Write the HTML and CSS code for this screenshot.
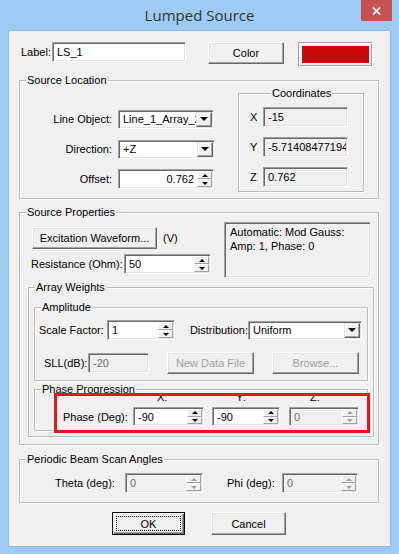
FILE: index.html
```html
<html>
<head>
    <meta charset='UTF-8'>
    <title>Lumped Source</title>
    <link rel="stylesheet" href="styles.css">
</head>
<body>
<div class='window'>
    <div class='titlebar'>
        <div></div>
        <div class='title'>Lumped Source</div>
        <div class='close'>
            <svg width='9' height='8' viewBox='0 0 9 8'><path d='M1 0.5 L8 7.5 M8 0.5 L1 7.5' stroke='#fff' stroke-width='1.7'/></svg>
        </div>
    </div>

    <div class='client'>
        <div class='top-row'>
            <span class='lab-label'>Label:</span>
            <div class='field f-label'><span class='val'>LS_1</span></div>
            <div class='btn b-color'>Color</div>
            <div class='swatch'><div class='swatch-fill'></div></div>
        </div>

        <div class='group g-loc'>
            <span class='group-title'>Source Location</span>
            <div class='loc-fields'>
                <div class='frow'>
                    <span class='flab'>Line Object:</span>
                    <div class='field combo c-line'><span class='val'>Line_1_Array_2</span><span class='drop'></span></div>
                </div>
                <div class='frow'>
                    <span class='flab'>Direction:</span>
                    <div class='field combo c-dir'><span class='val'>+Z</span><span class='drop'></span></div>
                </div>
                <div class='frow'>
                    <span class='flab'>Offset:</span>
                    <div class='field f-off'><span class='val right'>0.762</span><span class='spin'><span class='sb up'></span><span class='sb down'></span></span></div>
                </div>
            </div>
            <div class='group g-coords'>
                <span class='group-title t-coords'>Coordinates</span>
                <div class='crow'><span class='clab'>X</span><div class='field ro cfield'><span class='val'>-15</span></div></div>
                <div class='crow'><span class='clab'>Y</span><div class='field ro cfield'><span class='val'>-5.71408477194</span></div></div>
                <div class='crow'><span class='clab'>Z</span><div class='field ro cfield'><span class='val'>0.762</span></div></div>
            </div>
        </div>

        <div class='group g-props'>
            <span class='group-title'>Source Properties</span>
            <div class='props-top'>
                <div class='props-left'>
                    <div class='wave-row'>
                        <div class='btn b-wave'>Excitation Waveform...</div>
                        <span class='units'>(V)</span>
                    </div>
                    <div class='res-row'>
                        <span class='res-lab'>Resistance (Ohm):</span>
                        <div class='field f-res'><span class='val'>50</span><span class='spin'><span class='sb up'></span><span class='sb down'></span></span></div>
                    </div>
                </div>
                <div class='info'>Automatic: Mod Gauss:<br>Amp: 1, Phase: 0</div>
            </div>

            <div class='group g-array'>
                <span class='group-title'>Array Weights</span>

                <div class='group g-amp'>
                    <span class='group-title'>Amplitude</span>
                    <div class='amp-row1'>
                        <span class='sf-lab'>Scale Factor:</span>
                        <div class='field f-sf'><span class='val'>1</span><span class='spin'><span class='sb up'></span><span class='sb down'></span></span></div>
                        <span class='dist-lab'>Distribution:</span>
                        <div class='field combo c-dist'><span class='val'>Uniform</span><span class='drop'></span></div>
                    </div>
                    <div class='amp-row2'>
                        <span class='sll-lab'>SLL(dB):</span>
                        <div class='field off f-sll'><span class='val'>-20</span></div>
                        <div class='btn off b-ndf'>New Data File</div>
                        <div class='btn off b-browse'>Browse...</div>
                    </div>
                </div>

                <div class='group g-phase'>
                    <span class='group-title'>Phase Progression</span>
                    <div class='axis-row'>
                        <span class='ax ax-x'>X:</span>
                        <span class='ax ax-y'>Y:</span>
                        <span class='ax ax-z'>Z:</span>
                    </div>
                    <div class='phase-row'>
                        <span class='ph-lab'>Phase (Deg):</span>
                        <div class='field ph-x'><span class='val'>-90</span><span class='spin'><span class='sb up'></span><span class='sb down'></span></span></div>
                        <div class='field ph-y'><span class='val'>-90</span><span class='spin'><span class='sb up'></span><span class='sb down'></span></span></div>
                        <div class='field off ph-z'><span class='val'>0</span><span class='spin'><span class='sb up'></span><span class='sb down'></span></span></div>
                    </div>
                    <div class='mark'></div>
                </div>
            </div>
        </div>

        <div class='group g-scan'>
            <span class='group-title'>Periodic Beam Scan Angles</span>
            <div class='scan-row'>
                <span class='th-lab'>Theta (deg):</span>
                <div class='field off f-th'><span class='val'>0</span><span class='spin'><span class='sb up'></span><span class='sb down'></span></span></div>
                <span class='phi-lab'>Phi (deg):</span>
                <div class='field off f-phi'><span class='val'>0</span><span class='spin'><span class='sb up'></span><span class='sb down'></span></span></div>
            </div>
        </div>

        <div class='actions'>
            <div class='btn b-ok'><span class='focus'>OK</span></div>
            <div class='btn b-cancel'>Cancel</div>
        </div>
    </div>
</div>
</body>
</html>
```

FILE: styles.css
```css
* {
    box-sizing: border-box;
}

body {
    margin: 0;
    background: #fff;
    font-family: 'Liberation Sans', Arial, sans-serif;
    font-size: 11px;
    color: #000;
}

.window {
    width: 399px;
    height: 554px;
    background: #9dcbf3;
}

.titlebar {
    height: 30px;
    display: grid;
    grid-template-columns: 1fr auto 1fr;
}

.title {
    font-family: 'Open Sans', sans-serif;
    font-size: 15px;
    color: #333;
    line-height: 30px;
}

.close {
    justify-self: end;
    margin-right: 7px;
    width: 31px;
    height: 21px;
    background: #c75050;
    display: flex;
    align-items: center;
    justify-content: center;
}

.client {
    margin: 0 8px;
    height: 517px;
    border: 1px solid #8fbbe3;
    background: #f0f0f0;
    padding: 11px 11px 0 10px;
}

/* group boxes */
.group {
    position: relative;
    border: 1px solid #bcbcbc;
    box-shadow: inset 1px 1px 0 #fff, 1px 1px 0 #fff;
}

.group-title {
    position: absolute;
    top: -7px;
    left: 6px;
    padding: 0 1px;
    background: #f0f0f0;
    line-height: 13px;
    white-space: nowrap;
}

/* controls */
.field {
    height: 20px;
    border: 1px solid;
    border-color: #a0a0a0 #fff #fff #a0a0a0;
    box-shadow: inset 1px 1px 0 #696969, inset -1px -1px 0 #e3e3e3;
    background: #fff;
    display: flex;
    align-items: center;
    padding: 1px;
}

.field .val {
    flex: 1;
    padding-left: 3px;
    white-space: nowrap;
    overflow: hidden;
}

.field .val.right {
    text-align: right;
    padding-right: 3px;
}

.field.ro {
    background: #f0f0f0;
}

.field.off {
    background: #f0f0f0;
    color: #6d6d6d;
}

.combo {
    height: 19px;
}

.drop {
    width: 16px;
    align-self: stretch;
    border: 1px solid;
    border-color: #e3e3e3 #696969 #696969 #e3e3e3;
    box-shadow: inset -1px -1px 0 #a0a0a0, inset 1px 1px 0 #fff;
    background: #f0f0f0;
    display: flex;
    align-items: center;
    justify-content: center;
}

.drop::after {
    content: '';
    border-left: 4px solid transparent;
    border-right: 4px solid transparent;
    border-top: 4px solid #000;
}

.spin {
    width: 15px;
    align-self: stretch;
    display: flex;
    flex-direction: column;
}

.sb {
    flex: 1;
    border: 1px solid;
    border-color: #fff #a0a0a0 #a0a0a0 #fff;
    background: #f0f0f0;
    display: flex;
    align-items: center;
    justify-content: center;
}

.sb.up::after {
    content: '';
    border-left: 3px solid transparent;
    border-right: 3px solid transparent;
    border-bottom: 3px solid #000;
}

.sb.down::after {
    content: '';
    border-left: 3px solid transparent;
    border-right: 3px solid transparent;
    border-top: 3px solid #000;
}

.off .sb.up::after {
    border-bottom-color: #a0a0a0;
}

.off .sb.down::after {
    border-top-color: #a0a0a0;
}

.btn {
    height: 22px;
    border: 1px solid;
    border-color: #fff #696969 #696969 #fff;
    box-shadow: inset -1px -1px 0 #a0a0a0, inset 1px 1px 0 #e3e3e3;
    background: #f0f0f0;
    display: flex;
    align-items: center;
    justify-content: center;
    white-space: nowrap;
}

.btn.off {
    color: #a0a0a0;
}

/* label row */
.top-row {
    display: flex;
    align-items: flex-start;
    height: 25px;
}

.lab-label {
    margin-left: 2px;
    width: 31px;
    line-height: 20px;
}

.f-label {
    width: 134px;
}

.b-color {
    margin-left: 22px;
    width: 76px;
}

.swatch {
    margin-left: 14px;
    width: 75px;
    height: 25px;
    border: 1px solid;
    border-color: #a0a0a0 #fff #fff #a0a0a0;
    box-shadow: inset 1px 1px 0 #fff, inset -1px -1px 0 #a0a0a0;
    padding: 3px;
}

.swatch-fill {
    height: 100%;
    background: #c80a0a;
}

/* source location */
.g-loc {
    margin-top: 13px;
    height: 119px;
    display: flex;
    align-items: flex-start;
}

.loc-fields {
    width: 218px;
    padding-top: 28px;
}

.frow {
    display: flex;
    align-items: center;
    height: 20px;
    margin-bottom: 10px;
}

.flab {
    width: 92px;
    text-align: right;
    margin-right: 6px;
}

.c-line, .f-off {
    width: 96px;
}

.c-dir {
    width: 97px;
}

.g-coords {
    margin-top: 12px;
    width: 126px;
    height: 99px;
    padding-top: 13px;
}

.t-coords {
    left: 32px;
}

.crow {
    display: flex;
    align-items: center;
    height: 20px;
    margin-bottom: 10px;
}

.clab {
    width: 24px;
    padding-left: 11px;
}

.cfield {
    width: 85px;
}

/* source properties */
.g-props {
    margin-top: 13px;
    height: 233px;
}

.props-top {
    display: flex;
    align-items: flex-start;
}

.props-left {
    width: 204px;
    padding: 14px 0 0 12px;
}

.wave-row {
    display: flex;
    align-items: center;
}

.b-wave {
    width: 125px;
}

.units {
    margin-left: 6px;
}

.res-row {
    display: flex;
    align-items: center;
    margin-top: 5px;
    margin-left: -1px;
}

.res-lab {
    width: 93px;
}

.f-res {
    width: 87px;
}

.info {
    margin-top: 9px;
    width: 147px;
    height: 56px;
    border: 1px solid;
    border-color: #a0a0a0 #fff #fff #a0a0a0;
    box-shadow: inset 1px 1px 0 #696969, inset -1px -1px 0 #e3e3e3;
    padding: 2px 5px;
    line-height: 14px;
}

.g-array {
    margin-top: 9px;
    margin-left: 8px;
    width: 346px;
    height: 150px;
}

.g-amp {
    margin-top: 19px;
    margin-left: 5px;
    width: 334px;
    height: 74px;
}

.amp-row1 {
    display: flex;
    align-items: center;
    padding-top: 12px;
}

.sf-lab {
    margin-left: 4px;
    width: 68px;
}

.f-sf {
    width: 68px;
}

.dist-lab {
    width: 73px;
    text-align: right;
}

.c-dist {
    width: 114px;
}

.amp-row2 {
    display: flex;
    align-items: center;
    margin-top: 12px;
}

.sll-lab {
    margin-left: 9px;
    width: 44px;
}

.f-sll {
    width: 61px;
}

.b-ndf, .b-browse {
    margin-left: 18px;
    width: 87px;
}

.g-phase {
    margin-top: 8px;
    margin-left: 5px;
    width: 334px;
    height: 42px;
}

.axis-row {
    display: flex;
    margin-left: 98px;
    padding-top: 1px;
    line-height: 12px;
}

.ax {
    padding-left: 24px;
}

.ax-x {
    width: 71px;
}

.ax-y {
    margin-left: 8px;
    width: 68px;
}

.ax-z {
    margin-left: 9px;
    width: 70px;
    padding-left: 21px;
}

.phase-row {
    display: flex;
    align-items: center;
    margin-top: 4px;
}

.ph-lab {
    margin-left: 28px;
    width: 70px;
}

.ph-x {
    width: 71px;
    height: 19px;
}

.ph-y {
    margin-left: 8px;
    width: 68px;
    height: 19px;
}

.ph-z {
    margin-left: 9px;
    width: 70px;
    height: 19px;
}

.mark {
    position: absolute;
    left: 19px;
    top: 3px;
    width: 316px;
    height: 40px;
    border: 3px solid #e3151f;
}

/* periodic beam */
.g-scan {
    margin-top: 14px;
    height: 44px;
    padding-top: 13px;
}

.scan-row {
    display: flex;
    align-items: center;
}

.th-lab {
    margin-left: 35px;
    width: 70px;
}

.f-th {
    width: 78px;
}

.phi-lab {
    margin-left: 24px;
    width: 55px;
}

.f-phi {
    width: 76px;
}

/* dialog buttons */
.actions {
    display: flex;
    margin-top: 9px;
}

.b-ok {
    margin-left: 93px;
    width: 73px;
    height: 23px;
    border: 1px solid #000;
    box-shadow: inset 1px 1px 0 #fff, inset -1px -1px 0 #696969, inset -2px -2px 0 #a0a0a0;
    padding: 3px;
}

.focus {
    flex: 1;
    align-self: stretch;
    border: 1px dotted #000;
    display: flex;
    align-items: center;
    justify-content: center;
}

.b-cancel {
    margin-left: 26px;
    width: 75px;
    height: 23px;
}
```
